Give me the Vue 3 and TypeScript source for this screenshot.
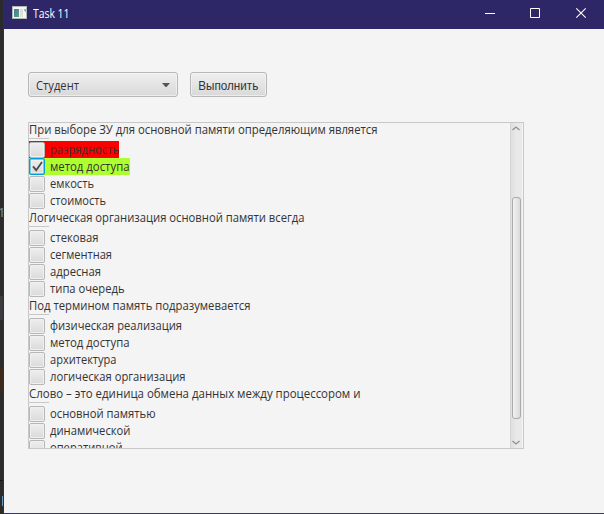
<script setup lang="ts">
interface Option { text: string; size: string; state?: 'wrong' | 'right'; checked?: boolean }
interface Question { title: string; size: string; options: Option[] }

const questions: Question[] = [
  {
    title: 'При выборе ЗУ для основной памяти определяющим является', size: '348.5',
    options: [
      { text: 'разрядность', size: '69', state: 'wrong' },
      { text: 'метод доступа', size: '79.5', state: 'right', checked: true },
      { text: 'емкость', size: '44' },
      { text: 'стоимость', size: '56' },
    ],
  },
  {
    title: 'Логическая организация основной памяти всегда', size: '275.5',
    options: [
      { text: 'стековая', size: '48.5' },
      { text: 'сегментная', size: '62' },
      { text: 'адресная', size: '51' },
      { text: 'типа очередь', size: '74.5' },
    ],
  },
  {
    title: 'Под термином память подразумевается', size: '221.5',
    options: [
      { text: 'физическая реализация', size: '132' },
      { text: 'метод доступа', size: '79.5' },
      { text: 'архитектура', size: '66.5' },
      { text: 'логическая организация', size: '135.5' },
    ],
  },
  {
    title: 'Слово – это единица обмена данных между процессором и', size: '331.5',
    options: [
      { text: 'основной памятью', size: '105.5' },
      { text: 'динамической', size: '80.5' },
      { text: 'оперативной', size: '72.5' },
    ],
  },
]
</script>

<template>
  <div class="screen">
    <div class="desktop">
      <span class="digit">1</span>
      <i class="band grey"></i><i class="band brown"></i><i class="band line"></i><i class="band caret"></i>
    </div>
    <div class="window">
      <header class="titlebar">
        <svg class="app-icon" width="15" height="13" viewBox="0 0 15 13">
          <defs>
            <linearGradient id="pic" x1="0" y1="0" x2="1" y2="1">
              <stop offset="0" stop-color="#477c9e" /><stop offset="1" stop-color="#56a47a" />
            </linearGradient>
          </defs>
          <rect width="15" height="13" fill="#b5b5b5" />
          <rect x="1" y="1" width="13" height="11" fill="#f5f5f5" />
          <rect x="2" y="3" width="5" height="8" fill="url(#pic)" />
          <rect x="8" y="3" width="3" height="8" fill="#dedede" />
          <path d="M12 3h2v3h-1v-1h-1z" fill="#8fbdb4" />
        </svg>
        <svg class="caption" width="60" height="17"><text x="0" y="12.5" textLength="36.5" lengthAdjust="spacingAndGlyphs">Task 11</text></svg>
        <svg class="controls" width="138" height="29" viewBox="0 0 138 29" fill="none" stroke="#fff">
          <path d="M19 13.5h10M64.5 8.5h9v9h-9z" />
          <path d="M110.3 8.3l9.4 9.4M119.7 8.3l-9.4 9.4" stroke-width="1.1" />
        </svg>
      </header>
      <main>
        <div class="toolbar">
          <div class="control combo">
            <svg width="60" height="17"><text x="0" y="12.5" textLength="43" lengthAdjust="spacingAndGlyphs">Студент</text></svg>
            <svg class="arrow" width="8" height="4" viewBox="0 0 8 4"><path d="M0 0h8L4.5 4h-1z" fill="#555" /></svg>
          </div>
          <button class="control run">
            <svg width="61" height="17"><text x="0.3" y="12.5" textLength="60" lengthAdjust="spacingAndGlyphs">Выполнить</text></svg>
          </button>
        </div>
        <div class="pane">
          <div class="viewport">
            <div class="content">
              <section v-for="q in questions" :key="q.title">
                <svg class="title" width="400" height="17"><text x="0" y="12.5" :textLength="q.size" lengthAdjust="spacingAndGlyphs">{{ q.title }}</text></svg>
                <div class="separator"></div>
                <div v-for="o in q.options" :key="o.text" class="option" :class="o.state">
                  <span class="box" :class="{ checked: o.checked }">
                    <svg v-if="o.checked" width="11" height="11" viewBox="0 0 11 11" fill="none"><path d="M1 5.4L4.2 9.2L10 1" stroke="#4b4b4b" stroke-width="1.8" /></svg>
                  </span>
                  <svg class="label" :width="o.size" height="17"><text x="0" y="13" :textLength="o.size" lengthAdjust="spacingAndGlyphs">{{ o.text }}</text></svg>
                </div>
              </section>
            </div>
          </div>
          <div class="scrollbar">
            <svg width="8" height="5" viewBox="0 0 8 5"><path d="M.5 4L4 1L7.5 4" /></svg>
            <div class="thumb"></div>
            <svg width="8" height="5" viewBox="0 0 8 5"><path d="M.5 1L4 4L7.5 1" /></svg>
          </div>
        </div>
      </main>
    </div>
  </div>
</template>

<style>
body { margin: 0; overflow: hidden; }
</style>

<style scoped>
* { box-sizing: border-box; }
.screen { display: flex; width: 604px; height: 514px; font: 12px "Open Sans", "Noto Sans", sans-serif; }
svg { display: block; flex: none; }
text { fill: #333; font-size: 12px; }
.desktop { position: relative; width: 3px; background: #2b2b2b; overflow: hidden; }
.digit { position: absolute; left: -2px; top: 203px; color: #6897bb; font: 13px/18px "Open Sans", sans-serif; }
.band { position: absolute; left: 0; width: 3px; }
.grey { top: 296px; height: 24px; background: #3c3c40; }
.brown { top: 368px; height: 24px; background: #3b2a1c; }
.line { top: 480px; height: 1px; background: #151515; }
.caret { top: 496px; height: 10px; left: 2px; width: 1px; background: #6897bb; }
.window { flex: 1; display: flex; flex-direction: column; background: #f4f4f4; border-left: 1px solid #2d2667; border-bottom: 1px solid #3c3373; }
.titlebar { display: flex; height: 29px; background: #2d2667; }
.app-icon { margin: 6px 6px 0 8px; }
.caption { margin-top: 5px; }
.caption text { fill: #fff; }
.controls { margin-left: auto; }
main { padding: 43px 24px 0; }
.toolbar { display: flex; gap: 12px; }
.control { display: flex; height: 25px; padding: 4px 7px; border: 1px solid #b7b7b7; border-radius: 3px; background: linear-gradient(#efefef, #d9d9d9); box-shadow: inset 0 0 0 1px #f5f5f5b0; }
.combo { width: 150px; justify-content: space-between; }
.arrow { margin-top: 6px; }
.run { width: 77px; }
.pane { display: flex; width: 496px; height: 327px; margin-top: 25px; border: 1px solid #c8c8c8; }
.viewport { flex: 1; overflow: hidden; }
.content { margin-top: -2px; }
.title, .label { overflow: visible; }
.separator { width: 20px; height: 3px; border-top: 1px solid #c8c8c8; }
.option { display: flex; gap: 5px; width: max-content; height: 17px; }
.wrong { background: #f00; }
.right { background: #adff2f; }
.box { width: 16px; height: 16px; margin-top: 1px; border: 1px solid #b7b7b7; border-radius: 2px; background: linear-gradient(#eee, #dadada); box-shadow: inset 0 0 0 1px #f0f0f0; }
.box.checked { display: grid; place-items: center; height: 17px; margin-top: 0; border-color: #039ed3; box-shadow: inset 0 0 0 .5px #039ed3, inset 0 0 0 1.5px #f6f6f6; }
.scrollbar { display: flex; flex-direction: column; align-items: center; width: 12px; margin-right: 1px; padding: 3px 0; border-left: 1px solid #d4d4d4; background: linear-gradient(90deg, #dfdfdf, #e9e9e9 50%, #e9e9e9); }
.scrollbar svg { margin-right: 1px; }
.scrollbar path { fill: none; stroke: #8f8f8f; stroke-width: 1.3; }
.thumb { width: 9px; height: 222px; margin: 66px 0 auto; border: 1px solid #aaa; border-radius: 3px; background: linear-gradient(90deg, #f2f2f2, #dadada); }
</style>
